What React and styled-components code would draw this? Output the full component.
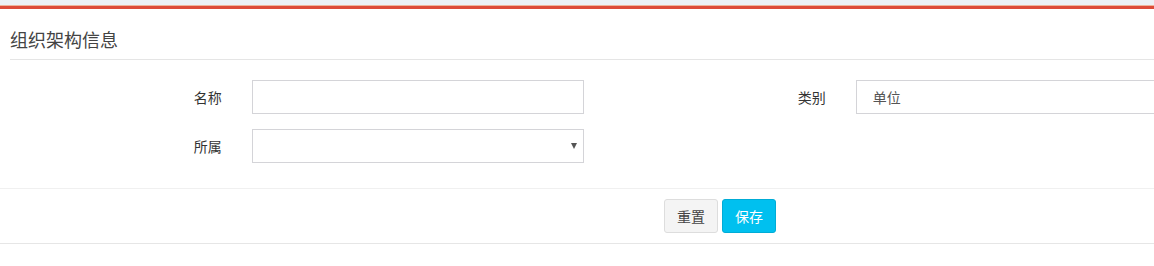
import React from "react";
import styled, { createGlobalStyle } from "styled-components";

const GlobalStyle = createGlobalStyle`
  html, body {
    margin: 0;
    padding: 0;
    background: #fff;
    overflow: hidden;
  }
  body {
    font-family: "Noto Sans CJK SC", "Liberation Sans", sans-serif;
    font-size: 14px;
    color: #333;
  }
`;

const Page = styled.div`
  background: #ecf0f5;
  padding-top: 6px;
  width: 100vw;
  overflow: hidden;
`;

const Box = styled.div`
  width: 1440px;
  background: #fff;
  border-top: 3px solid #dd4b39;
  box-shadow: 0 -1px 0 #eeb49a;
`;

const BoxHeader = styled.div`
  margin: 0 10px;
  padding: 20px 0 9px;
  border-bottom: 1px solid #e5e5e5;
`;

const Title = styled.h3`
  margin: 0;
  font-size: 18px;
  line-height: 21px;
  font-weight: normal;
  color: #444;
`;

const BoxBody = styled.div`
  padding: 20px 10px 10px;
`;

const FormRow = styled.div`
  display: grid;
  grid-template-columns: repeat(12, 1fr);
  margin: 0 -15px 15px;
  align-items: center;
`;

const Label = styled.label`
  grid-column: span 2;
  padding: 0 15px;
  text-align: right;
  font-size: 14px;
  color: #333;
`;

const Control = styled.div`
  grid-column: span 3;
  padding: 0 15px;
  position: relative;
`;

const Input = styled.input`
  box-sizing: border-box;
  width: 100%;
  height: 34px;
  padding: 6px 16px;
  border: 1px solid #d4d4d8;
  border-radius: 0;
  font-family: inherit;
  font-size: 14px;
  color: #555;
  outline: none;
  background: #fff;
`;

const Select = styled.select`
  box-sizing: border-box;
  width: 100%;
  height: 34px;
  padding: 6px 12px;
  border: 1px solid #d4d4d8;
  border-radius: 0;
  appearance: none;
  background: #fff;
  font-family: inherit;
  font-size: 14px;
  outline: none;
`;

const Caret = styled.span`
  position: absolute;
  right: 22px;
  top: 14px;
  width: 0;
  height: 0;
  border-left: 3px solid transparent;
  border-right: 3px solid transparent;
  border-top: 6px solid #555;
  pointer-events: none;
`;

const BoxFooter = styled.div`
  border-top: 1px solid #f0f0f0;
  border-bottom: 1px solid #e6e6e6;
  box-shadow: 0 1px 0 #f5f5f5;
  padding: 10px;
  display: flex;
  justify-content: center;
  gap: 4px;
`;

const Button = styled.button`
  box-sizing: border-box;
  height: 34px;
  padding: 6px 12px;
  font-family: inherit;
  font-size: 14px;
  line-height: 20px;
  border-radius: 3px;
  border: 1px solid ${(p) => (p.primary ? "#00acd6" : "#ddd")};
  background: ${(p) => (p.primary ? "#00c0ef" : "#f4f4f4")};
  color: ${(p) => (p.primary ? "#fff" : "#444")};
`;

const App = () => {
  return (
    <Page>
      <GlobalStyle />
      <Box>
        <BoxHeader>
          <Title>组织架构信息</Title>
        </BoxHeader>
        <BoxBody>
          <FormRow>
            <Label>名称</Label>
            <Control>
              <Input defaultValue="" />
            </Control>
            <Label>类别</Label>
            <Control>
              <Input defaultValue="单位" />
            </Control>
          </FormRow>
          <FormRow>
            <Label>所属</Label>
            <Control>
              <Select defaultValue="">
                <option value=""></option>
              </Select>
              <Caret />
            </Control>
          </FormRow>
        </BoxBody>
        <BoxFooter>
          <Button>重置</Button>
          <Button primary>保存</Button>
        </BoxFooter>
      </Box>
    </Page>
  );
};

export default App;
